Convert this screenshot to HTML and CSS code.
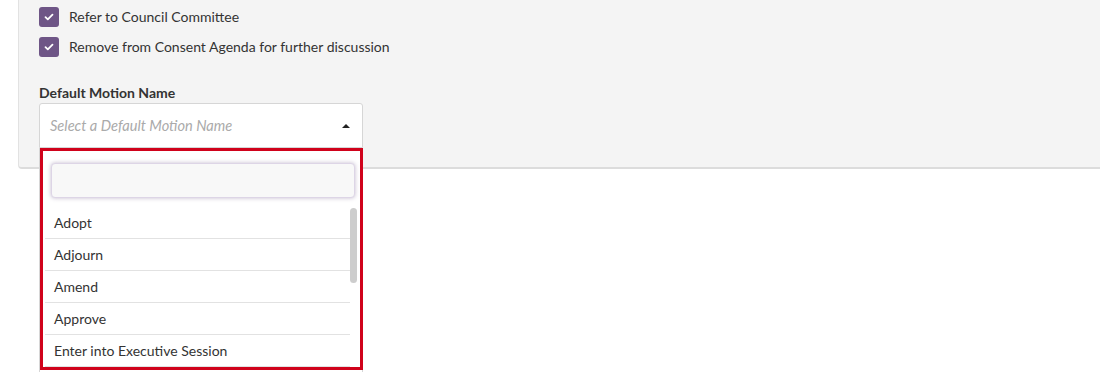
FILE: index.html
```html
<!DOCTYPE html>
<html>
<head>
<meta charset="utf-8">
<link rel="stylesheet" href="styles.css">
</head>
<body>
<div class="panel">
  <div class="check-row">
    <span class="box"><svg width="10" height="8" viewBox="0 0 10 8"><path d="M1.5 4.2 L3.8 6.4 L8.5 1.6" fill="none" stroke="#fff" stroke-width="1.8" stroke-linecap="round" stroke-linejoin="round"/></svg></span>
    <span class="check-label">Refer to Council Committee</span>
  </div>
  <div class="check-row">
    <span class="box"><svg width="10" height="8" viewBox="0 0 10 8"><path d="M1.5 4.2 L3.8 6.4 L8.5 1.6" fill="none" stroke="#fff" stroke-width="1.8" stroke-linecap="round" stroke-linejoin="round"/></svg></span>
    <span class="check-label">Remove from Consent Agenda for further discussion</span>
  </div>
  <div class="field-label">Default Motion Name</div>
  <div class="select-wrap">
    <div class="select">
      <span class="placeholder">Select a Default Motion Name</span>
      <span class="caret"></span>
    </div>
    <div class="dropdown">
      <div class="search"></div>
      <div class="list-wrap">
        <ul class="list">
          <li>Adopt</li>
          <li>Adjourn</li>
          <li>Amend</li>
          <li>Approve</li>
          <li>Enter into Executive Session</li>
        </ul>
        <div class="scrollbar"><div class="thumb"></div></div>
      </div>
    </div>
    <div class="highlight"></div>
  </div>
</div>
</body>
</html>
```
FILE: styles.css
```css
html, body {
  margin: 0;
  padding: 0;
  background: #fff;
  font-family: Lato, "Open Sans", sans-serif;
  font-size: 14px;
  color: #333;
  overflow: hidden;
  height: 372px;
}
.panel {
  margin-left: 18px;
  height: 169px;
  box-sizing: border-box;
  background: #f4f4f4;
  border-left: 1px solid #e2e2e2;
  border-bottom: 2px solid #dcdcdc;
  border-bottom-left-radius: 4px;
  padding: 7px 0 0 20px;
}
.check-row {
  display: flex;
  align-items: center;
  height: 20px;
  margin-bottom: 10px;
}
.box {
  width: 20px;
  height: 20px;
  box-sizing: border-box;
  border-radius: 3px;
  background: #6e5586;
  display: flex;
  align-items: center;
  justify-content: center;
  margin-right: 10px;
}
.check-label {
  line-height: 20px;
}
.field-label {
  font-weight: bold;
  margin-top: 27px;
  line-height: 18px;
  height: 19px;
}
.select-wrap {
  position: relative;
  width: 324px;
}
.select {
  height: 45px;
  box-sizing: border-box;
  background: #fff;
  border: 1px solid #d6d6d6;
  border-radius: 3px 3px 0 0;
  display: flex;
  align-items: center;
  padding: 0 10px;
  justify-content: space-between;
}
.placeholder {
  font-style: italic;
  font-size: 14.6px;
  color: #aaa;
}
.caret {
  width: 0;
  height: 0;
  border-left: 4px solid transparent;
  border-right: 4px solid transparent;
  border-bottom: 4px solid #222;
  margin-right: 2px;
}
.dropdown {
  position: absolute;
  left: 0;
  top: 45px;
  width: 324px;
  height: 240px;
  box-sizing: border-box;
  background: #fff;
  border: 1px solid #d6d6d6;
  border-top: none;
  padding: 15px 4px 0 5px;
}
.search {
  height: 35px;
  margin: 0 3px 0 6px;
  box-sizing: border-box;
  background: #f8f8f8;
  border: 1px solid #ddd5e6;
  border-radius: 4px;
  box-shadow: 0 0 4px rgba(110, 85, 134, 0.4);
}
.list-wrap {
  display: flex;
  margin-top: 9px;
}
.list {
  list-style: none;
  margin: 0;
  padding: 0;
  flex: 1;
}
.list li {
  height: 31px;
  line-height: 32px;
  padding-left: 9px;
  border-bottom: 1px solid #e2e2e2;
}
.scrollbar {
  width: 8px;
  padding-top: 1px;
}
.thumb {
  width: 7px;
  height: 75px;
  background: #cdcdcd;
  border-radius: 4px;
}
.highlight {
  position: absolute;
  left: 1px;
  top: 45px;
  width: 323px;
  height: 222px;
  box-sizing: border-box;
  border: 3px solid #d0021b;
  pointer-events: none;
}
```
